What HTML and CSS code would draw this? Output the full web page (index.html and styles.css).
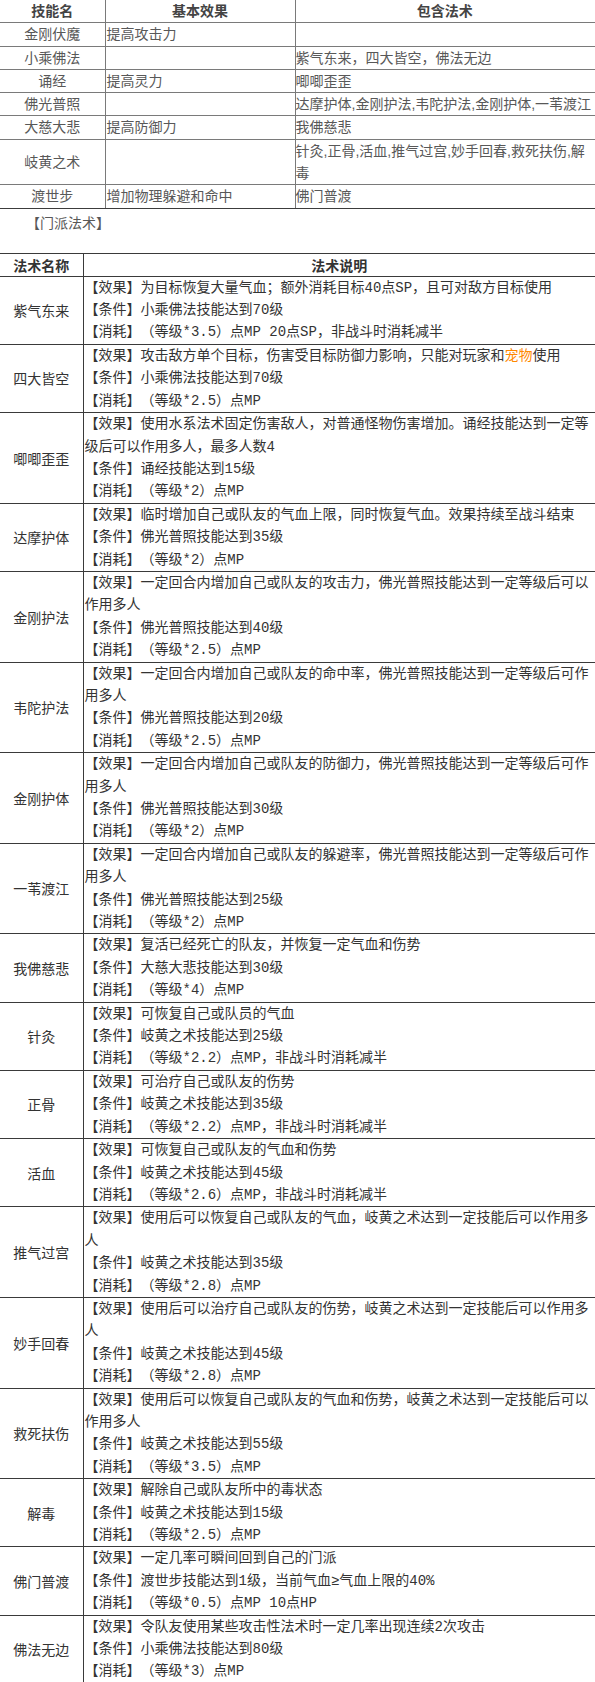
FILE: index.html
```html
<!DOCTYPE html>
<html lang="zh-CN">
<head>
<meta charset="utf-8">
<title>化生寺技能</title>
<link rel="stylesheet" href="styles.css">
</head>
<body>
<table class="skills">
  <colgroup><col class="k1"><col class="k2"><col class="k3"></colgroup>
  <tr><th>技能名</th><th>基本效果</th><th>包含法术</th></tr>
  <tr><td>金刚伏魔</td><td>提高攻击力</td><td></td></tr>
  <tr><td>小乘佛法</td><td></td><td>紫气东来，四大皆空，佛法无边</td></tr>
  <tr><td>诵经</td><td>提高灵力</td><td>唧唧歪歪</td></tr>
  <tr><td>佛光普照</td><td></td><td>达摩护体,金刚护法,韦陀护法,金刚护体,一苇渡江</td></tr>
  <tr><td>大慈大悲</td><td>提高防御力</td><td>我佛慈悲</td></tr>
  <tr><td>岐黄之术</td><td></td><td>针灸,正骨,活血,推气过宫,妙手回春,救死扶伤,解毒</td></tr>
  <tr><td>渡世步</td><td>增加物理躲避和命中</td><td>佛门普渡</td></tr>
</table>
<p class="section">【门派法术】</p>
<table class="spells">
  <colgroup><col class="s1"><col class="s2"></colgroup>
  <tr><th>法术名称</th><th>法术说明</th></tr>
  <tr><td class="name">紫气东来</td><td class="desc">
    <p>【效果】为目标恢复大量气血；额外消耗目标40点SP，且可对敌方目标使用</p>
    <p>【条件】小乘佛法技能达到70级</p>
    <p>【消耗】（等级*3.5）点MP 20点SP，非战斗时消耗减半</p></td></tr>
  <tr><td class="name">四大皆空</td><td class="desc">
    <p>【效果】攻击敌方单个目标，伤害受目标防御力影响，只能对玩家和<span class="pet">宠物</span>使用</p>
    <p>【条件】小乘佛法技能达到70级</p>
    <p>【消耗】（等级*2.5）点MP</p></td></tr>
  <tr><td class="name">唧唧歪歪</td><td class="desc">
    <p>【效果】使用水系法术固定伤害敌人，对普通怪物伤害增加。诵经技能达到一定等级后可以作用多人，最多人数4</p>
    <p>【条件】诵经技能达到15级</p>
    <p>【消耗】（等级*2）点MP</p></td></tr>
  <tr><td class="name">达摩护体</td><td class="desc">
    <p>【效果】临时增加自己或队友的气血上限，同时恢复气血。效果持续至战斗结束</p>
    <p>【条件】佛光普照技能达到35级</p>
    <p>【消耗】（等级*2）点MP</p></td></tr>
  <tr><td class="name">金刚护法</td><td class="desc">
    <p>【效果】一定回合内增加自己或队友的攻击力，佛光普照技能达到一定等级后可以作用多人</p>
    <p>【条件】佛光普照技能达到40级</p>
    <p>【消耗】（等级*2.5）点MP</p></td></tr>
  <tr><td class="name">韦陀护法</td><td class="desc">
    <p>【效果】一定回合内增加自己或队友的命中率，佛光普照技能达到一定等级后可作用多人</p>
    <p>【条件】佛光普照技能达到20级</p>
    <p>【消耗】（等级*2.5）点MP</p></td></tr>
  <tr><td class="name">金刚护体</td><td class="desc">
    <p>【效果】一定回合内增加自己或队友的防御力，佛光普照技能达到一定等级后可作用多人</p>
    <p>【条件】佛光普照技能达到30级</p>
    <p>【消耗】（等级*2）点MP</p></td></tr>
  <tr><td class="name">一苇渡江</td><td class="desc">
    <p>【效果】一定回合内增加自己或队友的躲避率，佛光普照技能达到一定等级后可作用多人</p>
    <p>【条件】佛光普照技能达到25级</p>
    <p>【消耗】（等级*2）点MP</p></td></tr>
  <tr><td class="name">我佛慈悲</td><td class="desc">
    <p>【效果】复活已经死亡的队友，并恢复一定气血和伤势</p>
    <p>【条件】大慈大悲技能达到30级</p>
    <p>【消耗】（等级*4）点MP</p></td></tr>
  <tr><td class="name">针灸</td><td class="desc">
    <p>【效果】可恢复自己或队员的气血</p>
    <p>【条件】岐黄之术技能达到25级</p>
    <p>【消耗】（等级*2.2）点MP，非战斗时消耗减半</p></td></tr>
  <tr><td class="name">正骨</td><td class="desc">
    <p>【效果】可治疗自己或队友的伤势</p>
    <p>【条件】岐黄之术技能达到35级</p>
    <p>【消耗】（等级*2.2）点MP，非战斗时消耗减半</p></td></tr>
  <tr><td class="name">活血</td><td class="desc">
    <p>【效果】可恢复自己或队友的气血和伤势</p>
    <p>【条件】岐黄之术技能达到45级</p>
    <p>【消耗】（等级*2.6）点MP，非战斗时消耗减半</p></td></tr>
  <tr><td class="name">推气过宫</td><td class="desc">
    <p>【效果】使用后可以恢复自己或队友的气血，岐黄之术达到一定技能后可以作用多人</p>
    <p>【条件】岐黄之术技能达到35级</p>
    <p>【消耗】（等级*2.8）点MP</p></td></tr>
  <tr><td class="name">妙手回春</td><td class="desc">
    <p>【效果】使用后可以治疗自己或队友的伤势，岐黄之术达到一定技能后可以作用多人</p>
    <p>【条件】岐黄之术技能达到45级</p>
    <p>【消耗】（等级*2.8）点MP</p></td></tr>
  <tr><td class="name">救死扶伤</td><td class="desc">
    <p>【效果】使用后可以恢复自己或队友的气血和伤势，岐黄之术达到一定技能后可以作用多人</p>
    <p>【条件】岐黄之术技能达到55级</p>
    <p>【消耗】（等级*3.5）点MP</p></td></tr>
  <tr><td class="name">解毒</td><td class="desc">
    <p>【效果】解除自己或队友所中的毒状态</p>
    <p>【条件】岐黄之术技能达到15级</p>
    <p>【消耗】（等级*2.5）点MP</p></td></tr>
  <tr><td class="name">佛门普渡</td><td class="desc">
    <p>【效果】一定几率可瞬间回到自己的门派</p>
    <p>【条件】渡世步技能达到1级，当前气血≥气血上限的40%</p>
    <p>【消耗】（等级*0.5）点MP 10点HP</p></td></tr>
  <tr><td class="name">佛法无边</td><td class="desc">
    <p>【效果】令队友使用某些攻击性法术时一定几率出现连续2次攻击</p>
    <p>【条件】小乘佛法技能达到80级</p>
    <p>【消耗】（等级*3）点MP</p></td></tr>
</table>
</body>
</html>
```
FILE: styles.css
```css
html, body {
  margin: 0;
  padding: 0;
  background: #fff;
}
body {
  text-spacing-trim: space-all;
  font-size: 14px;
}

/* ---------- skill overview table ---------- */
.skills {
  width: 595px;
  border-collapse: collapse;
  table-layout: fixed;
  font-family: "Liberation Sans", "Noto Sans CJK SC", sans-serif;
  font-size: 14px;
  line-height: 22.3px;
  color: #585858;
}
.skills .k1 { width: 105px; }
.skills .k2 { width: 190px; }
.skills .k3 { width: 300px; }
.skills th,
.skills td {
  border: 1px solid #7a7a7a;
  padding: 0 1px;
  text-align: left;
  vertical-align: middle;
}
.skills th {
  border-top: none;
  font-weight: bold;
  text-align: center;
  color: #444;
}
.skills th:first-child,
.skills td:first-child {
  border-left: none;
  text-align: center;
}
.skills th:last-child,
.skills td:last-child {
  border-right: none;
  padding-left: 0;
}
.skills tr:last-child td {
  border-bottom: 1px solid #3c3c3c;
}

.section {
  margin: 0;
  padding: 2px 0 0 26px;
  line-height: 24px;
  font-family: "Liberation Sans", "Noto Sans CJK SC", sans-serif;
  font-size: 14px;
  color: #585858;
}

/* ---------- spell table ---------- */
.spells {
  width: 595px;
  margin-top: 18px;
  border-collapse: collapse;
  table-layout: fixed;
  font-family: "Liberation Mono", "Noto Sans CJK SC", monospace;
  font-size: 14px;
  line-height: 22.4px;
  color: #333;
}
.spells .s1 { width: 83px; }
.spells .s2 { width: 512px; }
.spells th,
.spells td {
  border: 1px solid #3a3a3a;
  padding: 0;
  vertical-align: middle;
}
.spells th {
  font-family: "Noto Sans CJK SC", sans-serif;
  font-weight: bold;
  line-height: 22px;
  text-align: center;
  color: #333;
}
.spells th:first-child,
.spells td:first-child {
  border-left: none;
}
.spells th:last-child,
.spells td:last-child {
  border-right: none;
}
.spells .name {
  font-family: "Noto Sans CJK SC", sans-serif;
  text-align: center;
}
.spells .desc {
  padding: 0 1px;
  text-align: left;
}
.spells .desc p {
  margin: 0;
}
.pet {
  color: #f80;
}
```
